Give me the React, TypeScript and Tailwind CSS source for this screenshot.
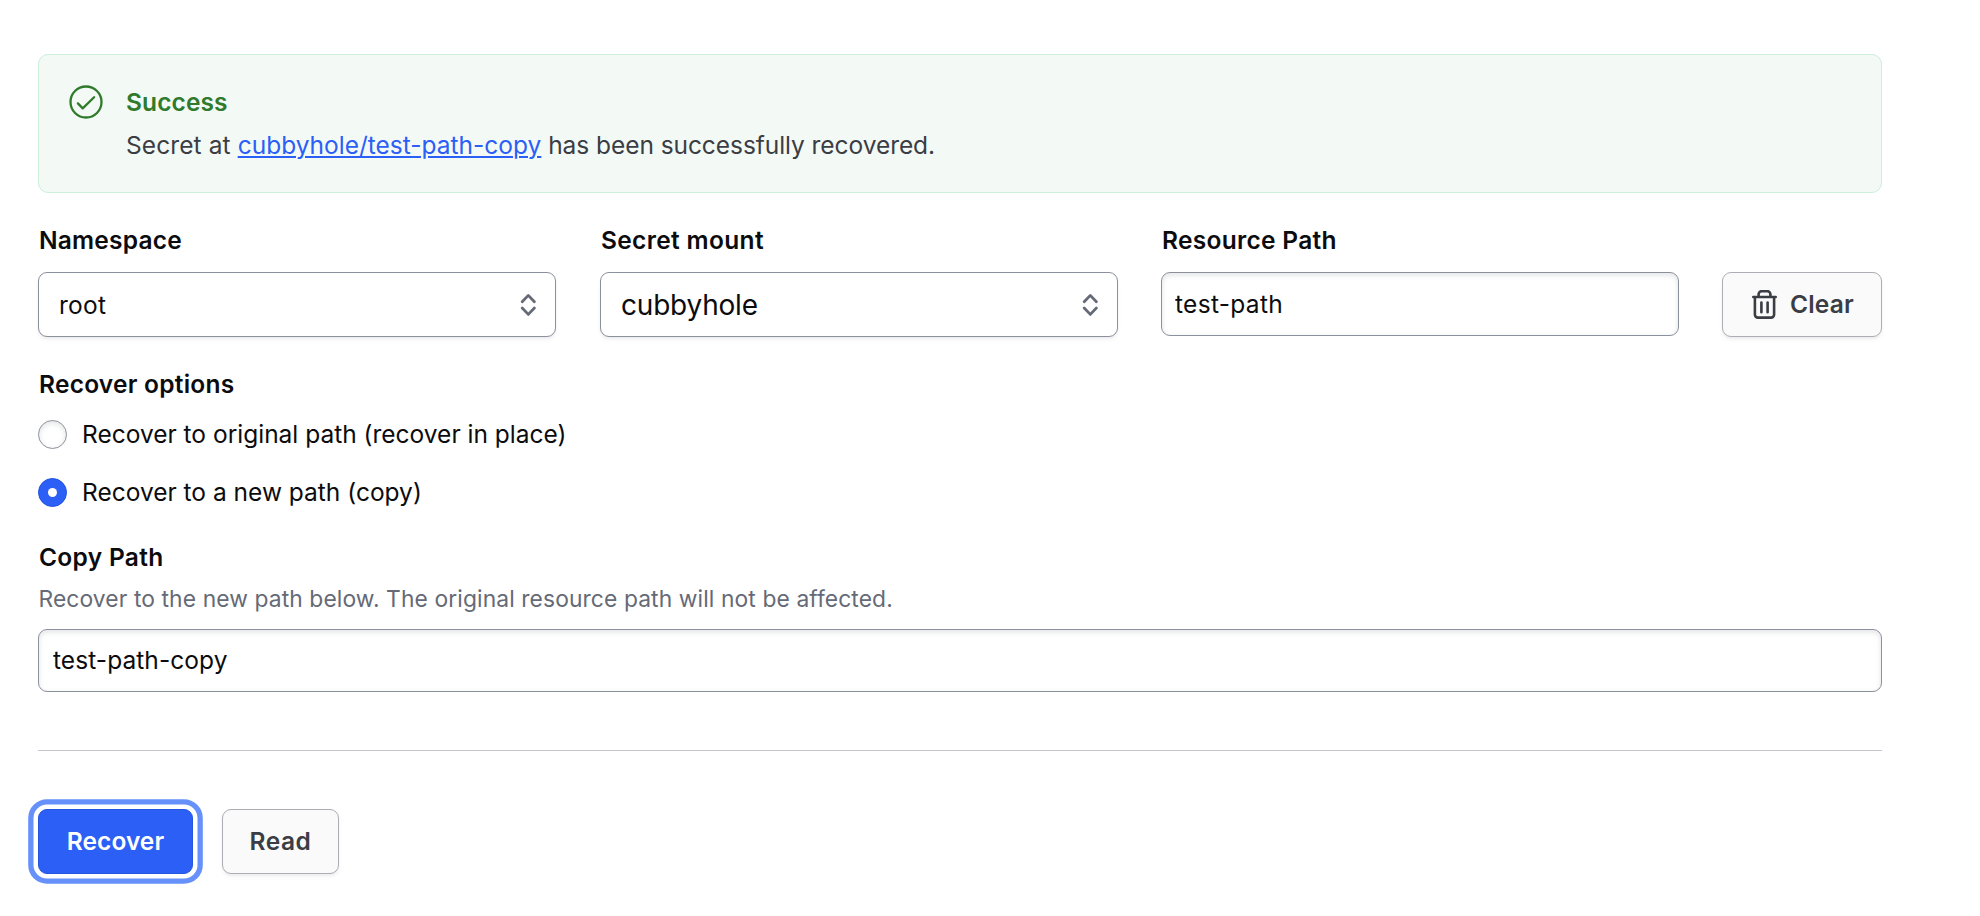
import type { ReactNode } from "react";

function Label({ children, tracking = "tracking-[0.34px]" }: { children: ReactNode; tracking?: string }) {
  return (
    <div className={`h-[34px] pl-px text-[24.5px] leading-[34px] font-semibold text-[#0c0c0e] ${tracking}`}>
      {children}
    </div>
  );
}

function CaretIcon() {
  return (
    <svg width="28" height="28" viewBox="0 0 28 28" fill="none" stroke="#656a76" strokeWidth="2.8" strokeLinecap="round" strokeLinejoin="round">
      <path d="M8.2 10.8L14.3 4.4l6.1 6.4M8.2 17l6.1 6.4 6.1-6.4" />
    </svg>
  );
}

function SelectField({ label, tracking, children }: { label: string; tracking?: string; children: ReactNode }) {
  return (
    <div className="flex w-[518px] flex-col gap-[15px]">
      <Label tracking={tracking}>{label}</Label>
      <button
        type="button"
        className="flex h-[65px] items-center justify-between rounded-[9px] border border-[#8c909c] bg-white pr-[13px] pl-[20px] text-[#0c0c0e] shadow-[0_2px_2px_rgba(101,106,118,0.05),0_3px_4px_rgba(101,106,118,0.06)]"
      >
        {children}
        <CaretIcon />
      </button>
    </div>
  );
}

function TrashIcon() {
  return (
    <svg width="29" height="29" viewBox="0 0 29 29" fill="none" stroke="#3b3d45" strokeWidth="2.6" strokeLinecap="round" strokeLinejoin="round">
      <path d="M3.3 7h22.4M8.6 7V4.2a3 3 0 0 1 3-3h5.8a3 3 0 0 1 3 3V7M4.9 7v17.6a3 3 0 0 0 3 3h13.2a3 3 0 0 0 3-3V7M11.4 12.6v9.6M17.6 12.6v9.6" />
    </svg>
  );
}

const inset = "shadow-[inset_0_2px_4px_1px_rgba(101,106,118,0.15)]";
const secondary =
  "flex h-[65px] items-center justify-center rounded-[9px] border border-[#acaeb3] bg-[#fafafa] text-[24.5px] font-semibold text-[#3b3d45] shadow-[0_2px_2px_rgba(101,106,118,0.05),0_3px_4px_rgba(101,106,118,0.06)]";

export default function App() {
  return (
    <main className="min-h-[916px] bg-white pt-[54px] pl-[38px] font-['Inter',sans-serif] text-[24.5px]">
      <div className="flex w-[1844px] flex-col">
        <section className="flex h-[139px] rounded-[10px] border border-[#cceeda] bg-[#f3f9f5] pt-[29px] pl-[29px]">
          <svg width="36" height="36" viewBox="0 0 36 36" fill="none" stroke="#2f7a2b" strokeWidth="2.3" strokeLinecap="round" strokeLinejoin="round">
            <circle cx="18" cy="18" r="15.5" />
            <path d="M9.9 19.4l4.8 5 11.4-11.2" />
          </svg>
          <div className="ml-[22px] flex flex-col gap-[7px] leading-9">
            <div className="font-semibold tracking-[0.1px] text-[#2f7a2b]">Success</div>
            <div className="whitespace-nowrap text-[#3b3d45]">
              <span className="tracking-[0.1px]">Secret at </span>
              <a className="text-[#2b5ff6] underline decoration-2 underline-offset-[2px]">cubbyhole/test-path-copy</a>
              <span className="tracking-[-0.06px]"> has been successfully recovered.</span>
            </div>
          </div>
        </section>

        <section className="mt-[30px] flex items-end">
          <SelectField label="Namespace" tracking="tracking-[0.2px]">
            <span className="pt-0.5 tracking-[0.27px]">root</span>
          </SelectField>
          <div className="ml-11">
            <SelectField label="Secret mount">
              <span className="text-[28px] tracking-[-0.2px]">cubbyhole</span>
            </SelectField>
          </div>
          <div className="ml-[43px] flex w-[518px] flex-col gap-[15px]">
            <Label tracking="tracking-[0.3px]">Resource Path</Label>
            <div className="h-[65px]">
              <input
                defaultValue="test-path"
                className={`h-16 w-full rounded-[9px] border border-[#8c909c] bg-white pl-[13px] tracking-[0.3px] text-[#0c0c0e] ${inset}`}
              />
            </div>
          </div>
          <button type="button" className={`ml-[43px] w-[160px] gap-[11px] tracking-[0.2px] ${secondary}`}>
            <TrashIcon />
            Clear
          </button>
        </section>

        <section className="mt-[30px] flex flex-col">
          <Label tracking="tracking-[0.24px]">Recover options</Label>
          <label className="mt-[19px] flex h-[29px] items-center gap-[15px] leading-[29px] text-[#0c0c0e]">
            <span className="size-[29px] rounded-full border border-[#8c909c] bg-white shadow-[inset_0_2px_4px_1px_rgba(101,106,118,0.15)]" />
            Recover to original path (recover in place)
          </label>
          <label className="mt-[29px] flex h-[29px] items-center gap-[15px] leading-[29px] text-[#0c0c0e]">
            <span className="flex size-[29px] items-center justify-center rounded-full border border-[#2355dd] bg-[#2b5ff6]">
              <span className="size-[9px] rounded-full bg-white" />
            </span>
            Recover to a new path (copy)
          </label>
        </section>

        <section className="mt-[33px] flex flex-col">
          <Label tracking="tracking-[0.3px]">Copy Path</Label>
          <p className="mt-[10px] h-[30px] pl-[0.5px] text-[22.8px] leading-[30px] tracking-[0.11px] text-[#656a76]">
            Recover to the new path below. The original resource path will not be affected.
          </p>
          <input
            defaultValue="test-path-copy"
            className={`mt-[15px] h-[63px] rounded-[9px] border border-[#8c909c] bg-white pb-0.5 pl-[14px] tracking-[0.07px] text-[#0c0c0e] ${inset}`}
          />
        </section>

        <hr className="mt-[58px] h-px border-0 bg-[#c2c5cb]" />

        <section className="mt-[58px] flex gap-[29px]">
          <button
            type="button"
            className="h-[65px] w-[155px] rounded-[9px] border border-[#2355dd] bg-[#2b5ff6] font-semibold tracking-[0.05px] text-white shadow-[0_0_0_4.5px_#fff,0_0_0_9.8px_#6690fa]"
          >
            Recover
          </button>
          <button type="button" className={`w-[117px] tracking-[0.5px] ${secondary}`}>
            Read
          </button>
        </section>
      </div>
    </main>
  );
}
